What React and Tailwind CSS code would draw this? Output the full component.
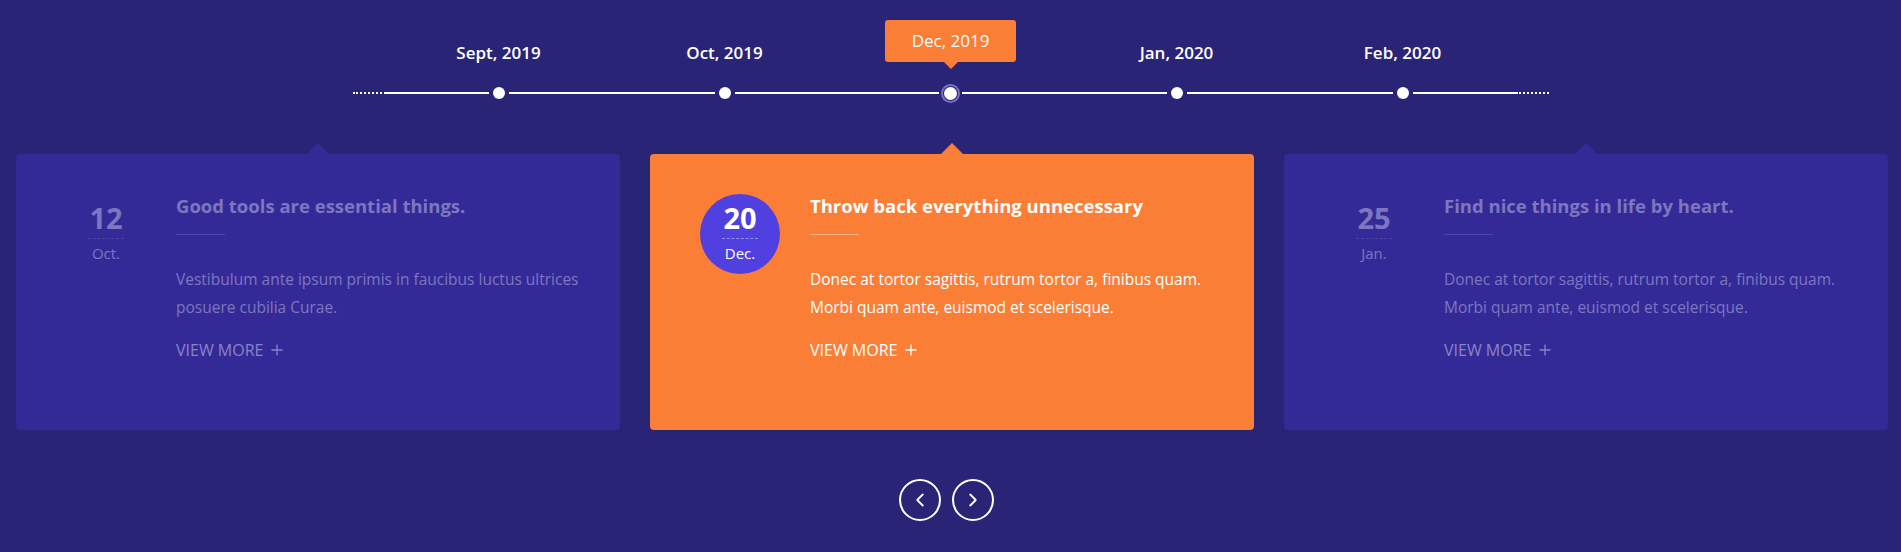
import { ChevronLeft, ChevronRight } from "lucide-react";

const months = [
  { label: "Sept, 2019" },
  { label: "Oct, 2019" },
  { label: "Dec, 2019", active: true },
  { label: "Jan, 2020" },
  { label: "Feb, 2020" },
];

const events = [
  {
    day: "12",
    month: "Oct.",
    title: "Good tools are essential things.",
    lines: [
      "Vestibulum ante ipsum primis in faucibus luctus ultrices",
      "posuere cubilia Curae.",
    ],
  },
  {
    day: "20",
    month: "Dec.",
    title: "Throw back everything unnecessary",
    lines: [
      "Donec at tortor sagittis, rutrum tortor a, finibus quam.",
      "Morbi quam ante, euismod et scelerisque.",
    ],
    active: true,
  },
  {
    day: "25",
    month: "Jan.",
    title: "Find nice things in life by heart.",
    lines: [
      "Donec at tortor sagittis, rutrum tortor a, finibus quam.",
      "Morbi quam ante, euismod et scelerisque.",
    ],
  },
];

const PlusIcon = () => (
  <svg width="12" height="12" viewBox="0 0 12 12" className="ml-[8px]">
    <path d="M6 0.5v11M0.5 6h11" stroke="currentColor" strokeWidth="1.3" fill="none" />
  </svg>
);

const TimelineCell = ({ label, active }) => (
  <div className="w-[226px] flex flex-col items-center">
    {/* Label */}
    <div className="h-[50px] flex flex-col items-center">
      {active ? (
        <>
          <div className="w-[131px] h-[42px] rounded-[3px] bg-[#fb7e36] flex items-center justify-center text-white text-[17px]">
            {label}
          </div>
          <div className="w-0 h-0 border-x-[7px] border-x-transparent border-t-[7px] border-t-[#fb7e36]" />
        </>
      ) : (
        <div className="mt-[21px] leading-[24px] text-[17px] font-semibold text-white">
          {label}
        </div>
      )}
    </div>

    {/* Dot on the line */}
    <div className="mt-[13px] h-[20px] w-full flex items-center">
      <div className="flex-1 h-[2px] bg-white" />
      {active ? (
        <span className="mx-[2px] w-[19px] h-[19px] rounded-full border-2 border-[#7772bd] p-[1px] flex">
          <span className="w-full h-full rounded-full bg-white" />
        </span>
      ) : (
        <span className="mx-[4px] w-[12px] h-[12px] rounded-full bg-white" />
      )}
      <div className="flex-1 h-[2px] bg-white" />
    </div>
  </div>
);

const EventCard = ({ day, month, title, lines, active }) => {
  const cardBg = active ? "bg-[#fb7e36]" : "bg-[#342a97]";
  const arrow = active ? "border-b-[#fb7e36]" : "border-b-[#342a97]";
  const text = active ? "text-white" : "text-[#7c77c0]";

  return (
    <div className={`relative w-[604px] h-[276px] rounded-[4px] ${cardBg}`}>
      <div
        className={`absolute -top-[11px] left-1/2 -translate-x-1/2 w-0 h-0 border-x-[11px] border-x-transparent border-b-[11px] ${arrow}`}
      />
      <div className="flex pt-[39px] pl-[50px]">
        {/* Date */}
        <div
          className={`w-[80px] h-[80px] mt-px shrink-0 rounded-full flex flex-col items-center justify-center ${
            active ? "bg-[#5040e0]" : ""
          } ${text}`}
        >
          <div className="text-[29px] font-bold leading-[30px] -mt-[3px]">{day}</div>
          <div
            className={`w-[36px] mt-[5px] border-t border-dashed ${
              active ? "border-[#9389f0]" : "border-[#4a41a8]"
            }`}
          />
          <div className="mt-[4px] text-[15px] leading-[20px]">{month}</div>
        </div>

        {/* Body */}
        <div className={`ml-[30px] ${text}`}>
          <h3 className="text-[18.5px] font-bold leading-[26px]">{title}</h3>
          <div
            className={`mt-[15px] w-[49px] h-px ${
              active ? "bg-[#fdb285]" : "bg-[#4d44ad]"
            }`}
          />
          <p className="mt-[30px] text-[15.5px] leading-[28px] whitespace-nowrap">
            {lines[0]}
            <br />
            {lines[1]}
          </p>
          <a
            href="#"
            className={`mt-[17px] flex items-center text-[16px] leading-[24px] uppercase ${
              active ? "text-white" : "text-[#8984c8]"
            }`}
          >
            View More
            <PlusIcon />
          </a>
        </div>
      </div>
    </div>
  );
};

export default function App() {
  return (
    <div className="w-[1901px] h-[552px] overflow-hidden bg-[#2a2477] font-['Open_Sans',sans-serif]">
      {/* Timeline */}
      <div className="pt-[20px] flex justify-center items-end">
        <div className="w-[33px] h-[20px] flex items-center">
          <div className="w-full border-t-2 border-dotted border-white" />
        </div>
        {months.map((m) => (
          <TimelineCell key={m.label} label={m.label} active={m.active} />
        ))}
        <div className="w-[33px] h-[20px] flex items-center">
          <div className="w-full border-t-2 border-dotted border-white" />
        </div>
      </div>

      {/* Cards */}
      <div className="mt-[51px] pl-[16px] flex gap-[30px]">
        {events.map((e) => (
          <EventCard key={e.day} {...e} />
        ))}
      </div>

      {/* Navigation */}
      <div className="mt-[49px] pr-[9px] flex justify-center gap-[11px]">
        <button className="w-[42px] h-[42px] rounded-full border-2 border-white flex items-center justify-center text-white">
          <ChevronLeft size={22} strokeWidth={2} />
        </button>
        <button className="w-[42px] h-[42px] rounded-full border-2 border-white flex items-center justify-center text-white">
          <ChevronRight size={22} strokeWidth={2} />
        </button>
      </div>
    </div>
  );
}
